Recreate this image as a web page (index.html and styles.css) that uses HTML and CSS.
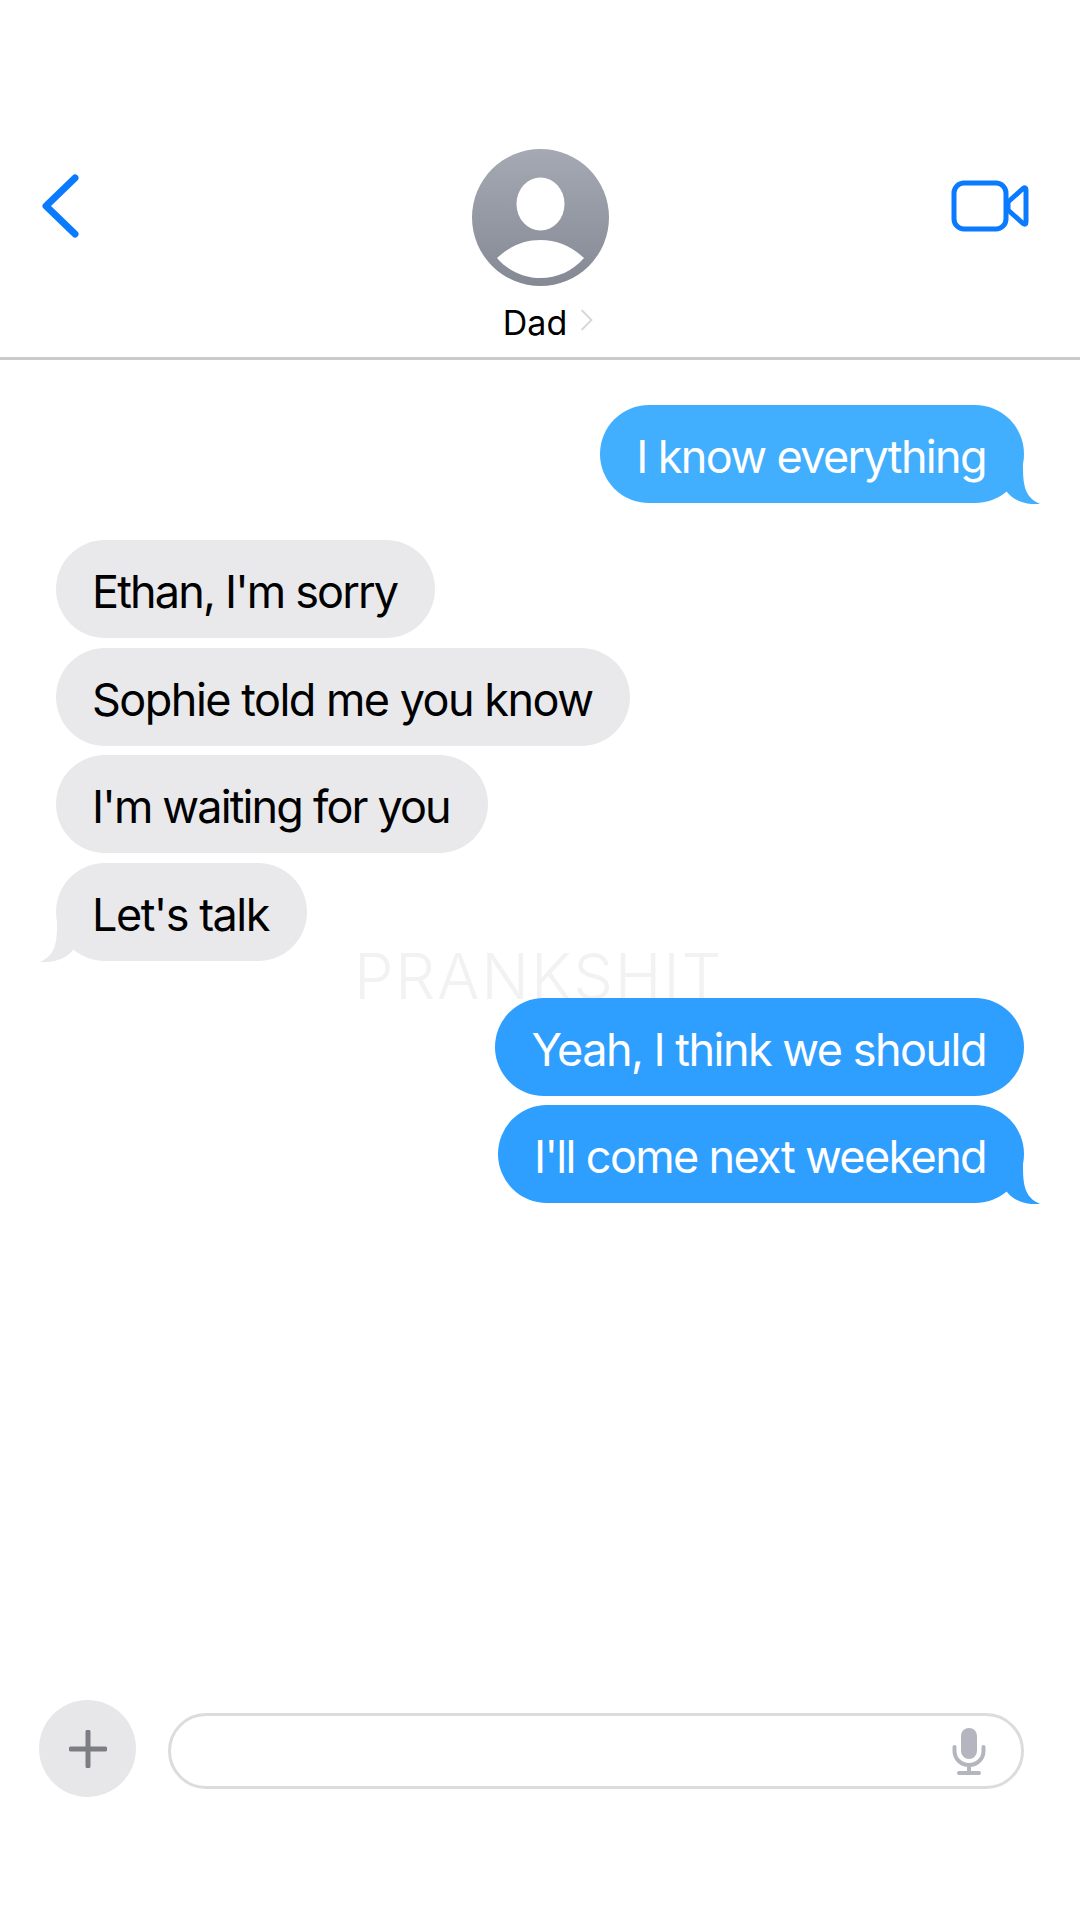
FILE: index.html
```html
<!DOCTYPE html>
<html lang="en">
<head>
  <meta charset="UTF-8">
  <title>Dad</title>
  <link rel="stylesheet" href="styles.css">
</head>
<body>
  <header class="nav">
    <svg class="nav-back" width="38" height="64" viewBox="0 0 38 64"><path d="M34 4 L5 32 L34 60" fill="none" stroke="#0a7bff" stroke-width="7" stroke-linecap="round" stroke-linejoin="round"/></svg>
    <div class="contact">
      <svg class="avatar" width="137" height="137" viewBox="0 0 137 137">
        <defs>
          <linearGradient id="avatarFill" x1="0" y1="0" x2="0" y2="1">
            <stop offset="0" stop-color="#a5a9b4"/>
            <stop offset="1" stop-color="#858993"/>
          </linearGradient>
        </defs>
        <circle cx="68.500" cy="68.500" r="68.500" fill="url(#avatarFill)"/>
        <ellipse cx="68.500" cy="55" rx="24" ry="26.500" fill="#fff"/>
        <path d="M25 109 C38 97 52 91 68.500 91 C85 91 99 97 112 109 C101 122 85 129 68.500 129 C52 129 36 122 25 109 Z" fill="#fff"/>
      </svg>
      <div class="contact-name">
        <span>Dad</span>
        <svg width="13" height="22" viewBox="0 0 13 22"><path d="M1.500 1 L11.500 11 L1.500 21" fill="none" stroke="#d6d6d8" stroke-width="1.800"/></svg>
      </div>
    </div>
    <svg class="nav-video" width="78" height="52" viewBox="0 0 78 52">
      <rect x="3" y="3" width="52" height="46" rx="10" fill="none" stroke="#0a7bff" stroke-width="5"/>
      <path d="M57 22 L72 8.500 Q75 6.500 75 10 L75 42 Q75 45.500 72 43.500 L57 30 Z" fill="none" stroke="#0a7bff" stroke-width="5" stroke-linejoin="round"/>
    </svg>
  </header>

  <main class="thread">
    <div class="watermark">PRANKSHIT</div>

    <div class="group group-out">
      <div class="bubble out first-out">I know everything
        <svg class="tail tail-right" width="40" height="40" viewBox="0 0 40 40"><path d="M23 0 C23 20 24 33 40 40 C28 41 15 38 7 28 L0 20 Z"/></svg>
      </div>
    </div>

    <div class="group group-in">
      <div class="bubble in tight">Ethan, I'm sorry</div>
      <div class="bubble in wide">Sophie told me you know</div>
      <div class="bubble in tight">I'm waiting for you</div>
      <div class="bubble in wide">Let's talk
        <svg class="tail tail-left" width="40" height="40" viewBox="0 0 40 40"><path d="M17 0 C17 20 16 33 0 40 C12 41 25 38 33 28 L40 20 Z"/></svg>
      </div>
    </div>

    <div class="group group-out">
      <div class="bubble out wide">Yeah, I think we should</div>
      <div class="bubble out">I'll come next weekend
        <svg class="tail tail-right" width="40" height="40" viewBox="0 0 40 40"><path d="M23 0 C23 20 24 33 40 40 C28 41 15 38 7 28 L0 20 Z"/></svg>
      </div>
    </div>
  </main>

  <footer class="composer">
    <div class="composer-add">
      <svg width="38" height="38" viewBox="0 0 38 38"><path d="M19 2 V36 M2 19 H36" stroke="#7d7e83" stroke-width="5" stroke-linecap="round"/></svg>
    </div>
    <div class="composer-input">
      <svg width="34" height="48" viewBox="0 0 34 48">
        <rect x="9" y="1" width="16" height="31" rx="8" fill="#b3b6bf"/>
        <path d="M2.500 20 V24 C2.500 32 9 38 17 38 C25 38 31.500 32 31.500 24 V20 M17 38 V45 M7 46 H27" fill="none" stroke="#b3b6bf" stroke-width="4" stroke-linecap="round"/>
      </svg>
    </div>
  </footer>
</body>
</html>
```

FILE: styles.css
```css
* {
  box-sizing: border-box;
}
body {
  margin: 0;
  width: 1080px;
  height: 1920px;
  display: flex;
  flex-direction: column;
  background-color: #fff;
  font-family: Inter, "Liberation Sans", sans-serif;
}
.nav {
  height: 360px;
  padding: 149px 41px 0;
  display: grid;
  grid-template-columns: 1fr auto 1fr;
  align-items: start;
  border-bottom: 3px solid #cbcbcd;
}
.nav-back {
  margin-top: 25px;
}
.nav-video {
  margin-top: 31px;
  margin-right: 10px;
  justify-self: end;
}
.contact {
  width: 137px;
  display: flex;
  flex-direction: column;
  align-items: center;
}
.avatar {
  display: block;
  flex: none;
}
.contact-name {
  display: flex;
  align-items: center;
  gap: 13px;
  margin-top: 15px;
  margin-left: 16px;
  font-size: 34px;
  line-height: 44px;
  color: #000;
  white-space: nowrap;
}
.contact-name svg {
  margin-bottom: 6px;
}
.thread {
  position: relative;
  flex: 1;
  padding: 45px 56px 0 56px;
  display: flex;
  flex-direction: column;
  gap: 37px;
}
.watermark {
  position: absolute;
  left: 354px;
  top: 578px;
  font-size: 63px;
  line-height: 76px;
  font-weight: 300;
  letter-spacing: 1.800px;
  color: #f2f2f3;
}
.group {
  position: relative;
  display: flex;
  flex-direction: column;
  gap: 9.500px;
}
.group-out {
  align-items: flex-end;
}
.group-in {
  align-items: flex-start;
}
.bubble {
  position: relative;
  height: 98px;
  padding: 0 38px 0 36px;
  border-radius: 49px;
  font-size: 45px;
  line-height: 103px;
  letter-spacing: -1.650px;
  white-space: nowrap;
}
.wide {
  letter-spacing: -1.520px;
}
.tight {
  letter-spacing: -1.850px;
}
.out {
  background-color: #2e9eff;
  color: #fff;
  fill: #2e9eff;
}
.first-out {
  background-color: #42aefe;
  fill: #42aefe;
}
.in {
  background-color: #e9e9eb;
  color: #000;
  fill: #e9e9eb;
}
.tail {
  position: absolute;
  bottom: -1px;
}
.tail-right {
  right: -16px;
}
.tail-left {
  left: -16px;
}
.composer {
  display: flex;
  align-items: center;
  gap: 32px;
  padding: 0 56px 123px 39px;
}
.composer-add {
  width: 97px;
  height: 97px;
  flex: none;
  border-radius: 50%;
  background-color: #e7e7e9;
  display: flex;
  align-items: center;
  justify-content: center;
}
.composer-input {
  flex: 1;
  height: 76px;
  margin-top: 5px;
  border: 3px solid #dcdcdd;
  border-radius: 38px;
  padding-right: 35px;
  display: flex;
  align-items: center;
  justify-content: flex-end;
}
```
